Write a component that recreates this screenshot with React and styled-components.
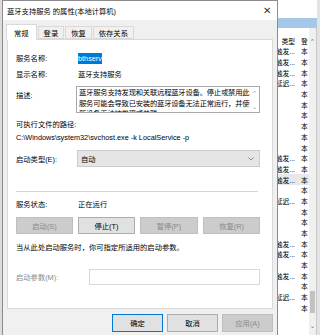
import React from "react";
import styled, { createGlobalStyle } from "styled-components";

const GlobalStyle = createGlobalStyle`
  html, body {
    margin: 0;
    padding: 0;
    background: #ffffff;
  }
  body {
    font-family: "Liberation Sans", "Noto Sans CJK SC", sans-serif;
    font-size: 7.3px;
    color: #000;
  }
`;

//page layout
const Screen = styled.div`
  width: 320px;
  height: 335px;
  display: flex;
  overflow: hidden;
`;

const LeftEdge = styled.div`
  width: 2px;
  flex: none;
  background: #dcdcdc;
`;

//the properties dialog
const Dialog = styled.div`
  width: 276px;
  height: 340px;
  flex: none;
  box-sizing: border-box;
  border: 1px solid #8c8c8c;
  background: #f0f0f0;
  display: flex;
  flex-direction: column;
`;

const TitleBar = styled.div`
  height: 19px;
  flex: none;
  background: #ffffff;
  display: flex;
  align-items: center;
  justify-content: space-between;
  padding: 0 6px 0 4px;
`;

const Title = styled.span`
  font-size: 7.3px;
  color: #000;
`;

const Close = styled.span`
  font-size: 10px;
  color: #333;
  line-height: 1;
`;

const Body = styled.div`
  padding: 3px 4px 0 4px;
  display: flex;
  flex-direction: column;
`;

const Tabs = styled.div`
  display: flex;
  align-items: flex-end;
  height: 16px;
`;

const Tab = styled.div`
  box-sizing: border-box;
  height: ${(p) => (p.active ? "16px" : "13px")};
  padding: 0 ${(p) => (p.active ? "7px" : "5px")};
  margin-left: ${(p) => (p.active ? "-1px" : "1px")};
  margin-bottom: ${(p) => (p.active ? "-1px" : "0")};
  background: ${(p) => (p.active ? "#ffffff" : "#f0f0f0")};
  border: 1px solid #d9d9d9;
  border-bottom: ${(p) => (p.active ? "none" : "1px solid #d9d9d9")};
  display: flex;
  align-items: center;
  position: relative;
  z-index: ${(p) => (p.active ? 1 : 0)};
`;

const Panel = styled.div`
  box-sizing: border-box;
  height: 270px;
  background: #ffffff;
  border: 1px solid #d9d9d9;
  padding: 11px 12px 0 8px;
  display: flex;
  flex-direction: column;
`;

const Row = styled.div`
  display: grid;
  grid-template-columns: 60px minmax(0, 1fr);
  align-items: ${(p) => (p.top ? "start" : "center")};
  height: ${(p) => p.h}px;
  margin-top: ${(p) => p.mt || 0}px;
`;

const Label = styled.span`
  color: ${(p) => (p.disabled ? "#8a8a8a" : "#000")};
  padding-top: ${(p) => (p.top ? 4 : 0)}px;
  white-space: nowrap;
`;

const Value = styled.span`
  padding-left: 2px;
  white-space: nowrap;
`;

const Selected = styled.span`
  margin-left: 2px;
  background: #0078d7;
  color: #ffffff;
  padding: 1px 0;
  align-self: center;
  justify-self: start;
`;

const Line = styled.div`
  height: ${(p) => p.h}px;
  margin-top: ${(p) => p.mt || 0}px;
  display: flex;
  align-items: center;
  white-space: nowrap;
`;

const TextBox = styled.div`
  box-sizing: border-box;
  height: 27px;
  border: 1px solid #a9a9a9;
  display: flex;
  overflow: hidden;
`;

const TextLines = styled.div`
  flex: 1;
  min-width: 0;
  padding: 1px 0 0 2px;
  line-height: 10.5px;
  letter-spacing: -0.2px;
  white-space: nowrap;
  overflow: hidden;
`;

const MiniScroll = styled.div`
  width: 9px;
  flex: none;
  display: flex;
  flex-direction: column;
  align-items: center;
  justify-content: space-between;
  padding: 3px 0 2px;
  color: #9a9a9a;
  font-size: 6px;
  line-height: 1;
`;

const Select = styled.div`
  box-sizing: border-box;
  height: 17px;
  margin-left: 1px;
  background: #e5e5e5;
  border: 1px solid #cccccc;
  display: flex;
  align-items: center;
  justify-content: space-between;
  padding: 0 5px 0 3px;
`;

const Chevron = styled.svg`
  width: 6px;
  height: 4px;
`;

const Separator = styled.div`
  height: 1px;
  background: #d4d4d4;
  margin: 24px 2px 0 0;
`;

const ButtonRow = styled.div`
  display: flex;
  gap: ${(p) => p.gap}px;
  margin-top: ${(p) => p.mt || 0}px;
  justify-content: ${(p) => p.justify || "flex-start"};
`;

const Button = styled.div`
  box-sizing: border-box;
  width: ${(p) => p.w}px;
  height: ${(p) => p.h}px;
  display: flex;
  align-items: center;
  justify-content: center;
  background: ${(p) => (p.disabled ? "#cccccc" : "#e1e1e1")};
  color: ${(p) => (p.disabled ? "#8a8a8a" : "#000")};
  border: 1px solid
    ${(p) => (p.primary ? "#0078d7" : p.disabled ? "#bfbfbf" : "#adadad")};
`;

const Input = styled.div`
  box-sizing: border-box;
  height: 16px;
  border: 1px solid #d9d9d9;
  background: #ffffff;
`;

const ParamRow = styled.div`
  display: grid;
  grid-template-columns: 73px 1fr;
  align-items: center;
  height: 16px;
  margin-top: 16px;
`;

//services window behind the dialog
const BackWindow = styled.div`
  flex: 1;
  display: flex;
  flex-direction: column;
  background: #ffffff;
`;

const BackTop = styled.div`
  height: 18px;
  background: #ffffff;
  border-right: 3px solid #e3e3e3;
`;

const BlueBar = styled.div`
  height: 10px;
  background: #a5c8e9;
  border-right: 3px solid #e3e3e3;
`;

const ListArea = styled.div`
  flex: 1;
  display: flex;
`;

const ListCols = styled.div`
  flex: 1;
  padding-top: 7px;
  display: flex;
  flex-direction: column;
`;

const ListRow = styled.div`
  height: ${(p) => (p.header ? 11 : 10.7)}px;
  display: flex;
  align-items: center;
  background: ${(p) => (p.hl ? "#e8e8e8" : "transparent")};
  font-size: 6.8px;
`;

const Cut = styled.div`
  width: 17px;
  overflow: hidden;
  display: flex;
  justify-content: flex-end;
  white-space: nowrap;
`;

const Logon = styled.div`
  margin-left: 6px;
  white-space: nowrap;
`;

const Scroll = styled.div`
  width: 7px;
  background: #f0f0f0;
  display: flex;
  flex-direction: column;
  align-items: center;
  padding: 10px 0 6px;
  color: #606060;
  font-size: 6px;
  line-height: 1;
`;

const Thumb = styled.div`
  width: 5px;
  height: 22px;
  background: #c2c2c2;
  margin: auto 0 10px;
`;

const WinBorder = styled.div`
  width: 3px;
  background: #e3e3e3;
  border-left: 1px solid #c8c8c8;
`;

const listRows = [
  "触发...", "触发...", "触发...", "延迟...", "", "", "", "", "", "",
  "触发...", "触发...", "触发...", "", "延迟...", "", "", "", "触发...",
  "触发...", "", "触发...", "", "延迟...", "",
];

export default function App() {
  return (
    <>
      <GlobalStyle />
      <Screen>
        <LeftEdge />
        <Dialog>
          <TitleBar>
            <Title>蓝牙支持服务 的属性(本地计算机)</Title>
            <Close>✕</Close>
          </TitleBar>
          <Body>
            <Tabs>
              <Tab active>常规</Tab>
              <Tab>登录</Tab>
              <Tab>恢复</Tab>
              <Tab>依存关系</Tab>
            </Tabs>
            <Panel>
              <Row h={14}>
                <Label>服务名称:</Label>
                <Selected>bthserv</Selected>
              </Row>
              <Row h={14} mt={2}>
                <Label>显示名称:</Label>
                <Value>蓝牙支持服务</Value>
              </Row>
              <Row h={27} mt={5} top>
                <Label top>描述:</Label>
                <TextBox>
                  <TextLines>
                    蓝牙服务支持发现和关联远程蓝牙设备。停止或禁用此
                    <br />
                    服务可能会导致已安装的蓝牙设备无法正常运行，并使
                    <br />
                    新设备无法被发现或关联。
                  </TextLines>
                  <MiniScroll>
                    <span>^</span>
                    <span>⌄</span>
                  </MiniScroll>
                </TextBox>
              </Row>
              <Line h={12} mt={5}>
                可执行文件的路径:
              </Line>
              <Line h={12} mt={1}>
                C:\Windows\system32\svchost.exe -k LocalService -p
              </Line>
              <Row h={17} mt={7}>
                <Label>启动类型(E):</Label>
                <Select>
                  <span>自动</span>
                  <Chevron viewBox="0 0 6 4">
                    <path d="M0.5 0.5 L3 3 L5.5 0.5" fill="none" stroke="#777" strokeWidth="0.8" />
                  </Chevron>
                </Select>
              </Row>
              <Separator />
              <Row h={12} mt={6}>
                <Label>服务状态:</Label>
                <Value>正在运行</Value>
              </Row>
              <ButtonRow gap={5} mt={7}>
                <Button w={57} h={17} disabled>启动(S)</Button>
                <Button w={57} h={17}>停止(T)</Button>
                <Button w={58} h={17} disabled>暂停(P)</Button>
                <Button w={57} h={17} disabled>恢复(R)</Button>
              </ButtonRow>
              <Line h={12} mt={7}>
                当从此处启动服务时，你可指定所适用的启动参数。
              </Line>
              <ParamRow>
                <Label disabled>启动参数(M):</Label>
                <Input />
              </ParamRow>
            </Panel>
            <ButtonRow gap={4} mt={5} justify="flex-end">
              <Button w={51} h={18} primary>确定</Button>
              <Button w={51} h={18}>取消</Button>
              <Button w={51} h={18} disabled>应用(A)</Button>
            </ButtonRow>
          </Body>
        </Dialog>
        <BackWindow>
          <BackTop />
          <BlueBar />
          <ListArea>
            <ListCols>
              <ListRow header>
                <Cut>类型</Cut>
                <Logon>登</Logon>
              </ListRow>
              {listRows.map((t, i) => (
                <ListRow key={i} hl={i === 12}>
                  <Cut>{t}</Cut>
                  <Logon>本</Logon>
                </ListRow>
              ))}
            </ListCols>
            <Scroll>
              <span>^</span>
              <Thumb />
              <span>⌄</span>
            </Scroll>
            <WinBorder />
          </ListArea>
        </BackWindow>
      </Screen>
    </>
  );
}
